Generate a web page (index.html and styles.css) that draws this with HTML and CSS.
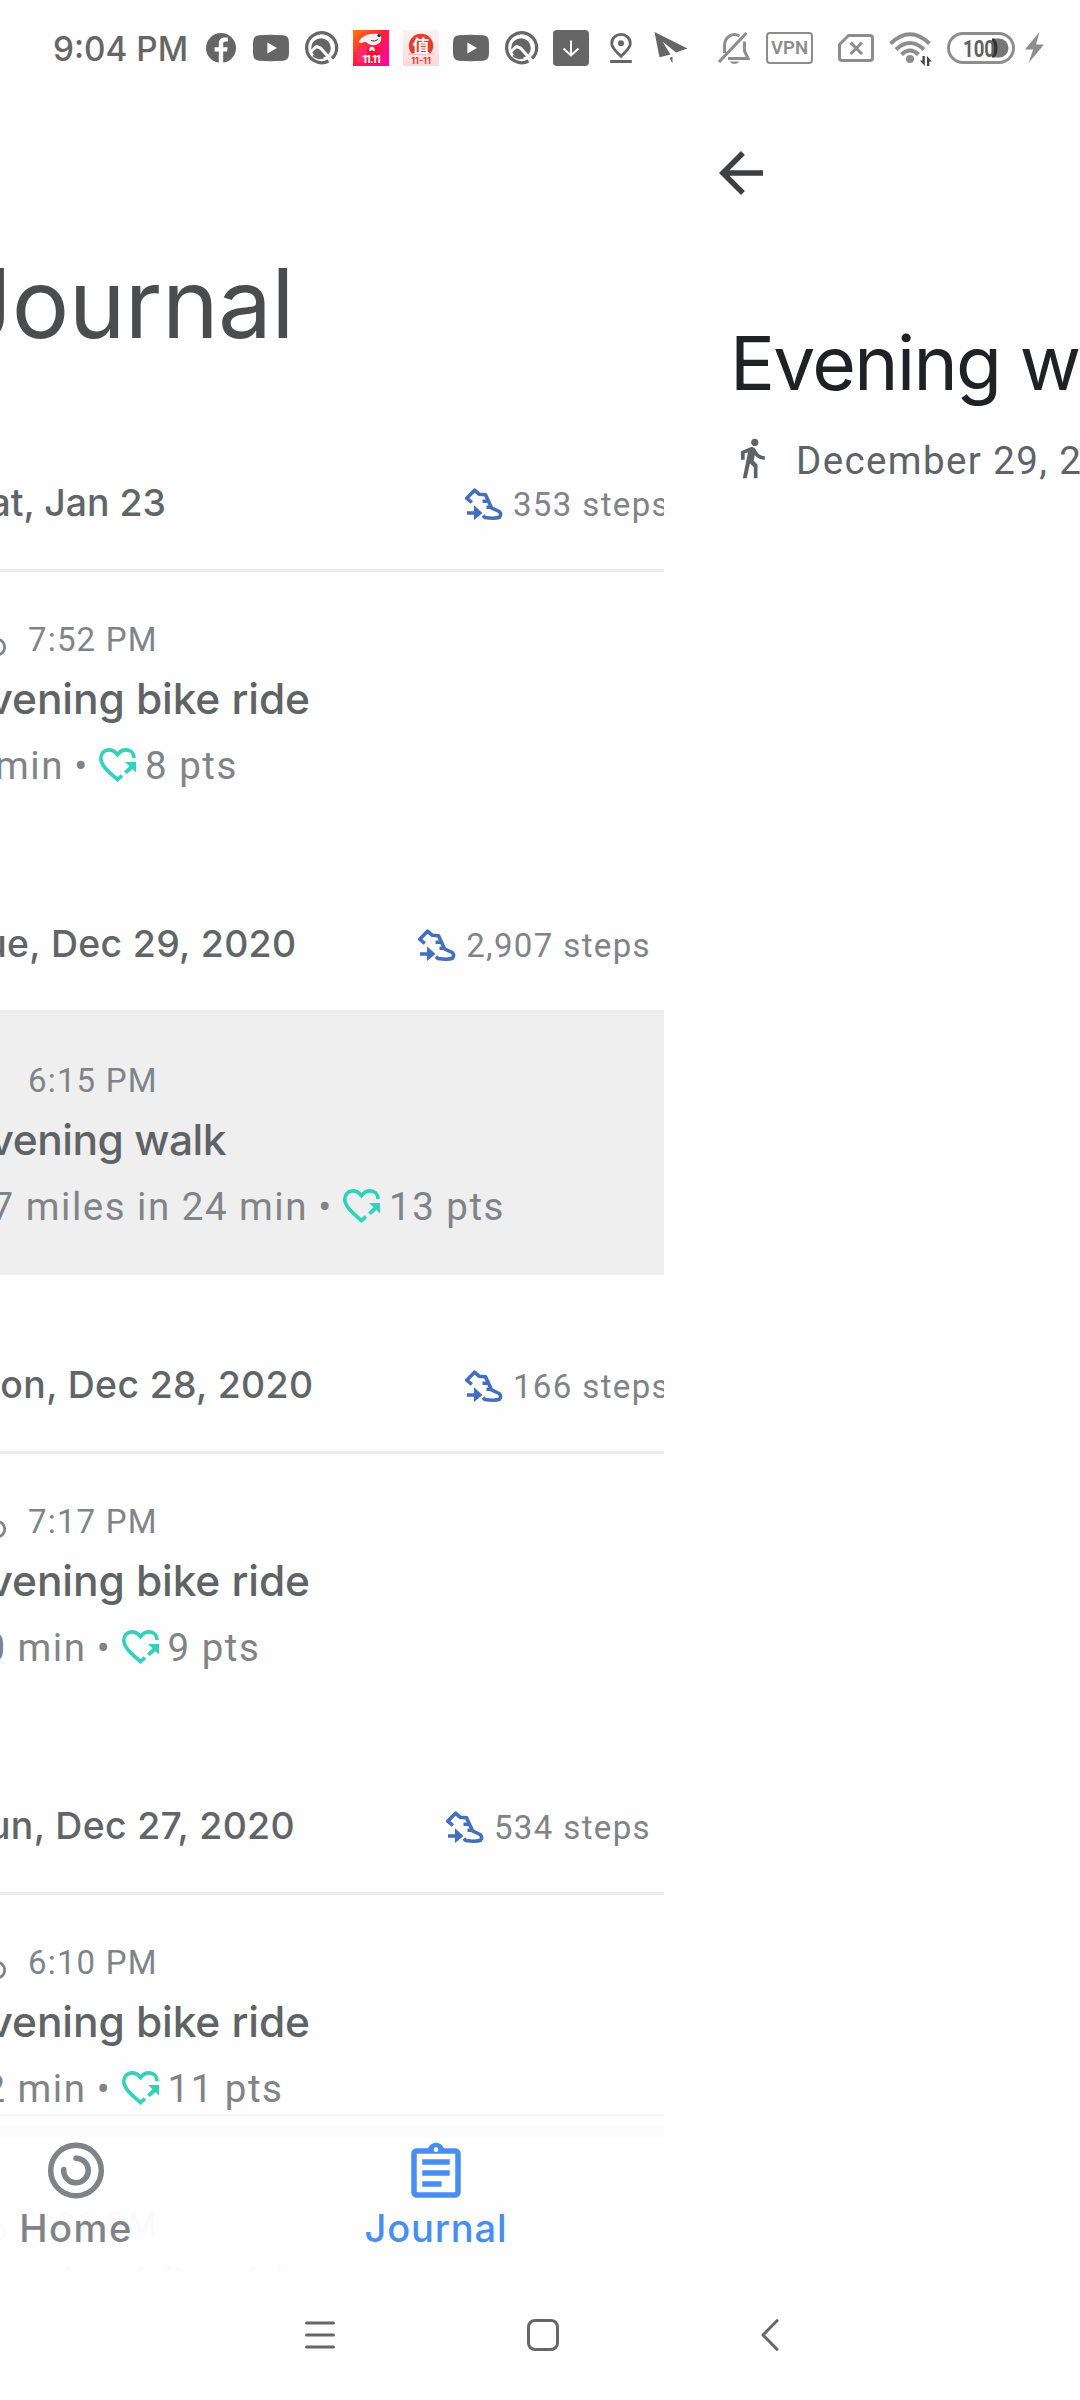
FILE: index.html
```html
<!DOCTYPE html>
<html lang="en">
<head>
<meta charset="utf-8">
<title>Journal</title>
<link rel="stylesheet" href="styles.css">
</head>
<body>
<svg class="defs" width="0" height="0" aria-hidden="true">
  <symbol id="youtube" viewBox="0 0 36 36"><path fill="#666" d="M6 5.2Q18 4.2 30 5.2Q35.5 5.4 35.8 11Q36.4 18 35.8 25Q35.5 30.4 30 30.7Q18 31.6 6 30.7Q.5 30.4.2 25Q-.4 18 .2 11Q.5 5.400 6 5.200Z"/><path fill="#fefefe" d="M14.400 12.600 24 18l-9.600 5.400z"/></symbol>
  <symbol id="quora" viewBox="0 0 36 36"><path fill="none" stroke="#666" stroke-width="3.200" d="M29 28.500A15 15 0 1 0 25.500 31"/><circle cx="18" cy="18" r="9.800" fill="#666"/><path fill="none" stroke="#fefefe" stroke-width="3" d="M7 22.500 13.500 16.500 17.500 18 31 33"/><path fill="none" stroke="#666" stroke-width="2" d="M10 25.500A10.500 10.500 0 0 0 20.500 27.500"/></symbol>
  <symbol id="steps" viewBox="0 0 38 32"><g fill="none" stroke="#4270bc" stroke-width="3.600" stroke-linejoin="round"><path d="M6.800 14.500 1.800 10.200 9.500 2.200 14 6.200 20.500 6.700 26.500 19.800 34.200 23.500Q36.800 26 34.500 29.300Q30 31 19.800 29.500L18 27.600"/><path d="M17.500 13.200h6M21.500 19.200h5"/></g><path fill="#4270bc" d="M2 23.300h7v-6L17.500 25 9 32v-5.300H2z"/></symbol>
  <symbol id="heart" viewBox="0 0 37 34"><path fill="none" stroke="#2fd2ba" stroke-width="3.600" d="M35 10C35 5 31.500 1.900 27.200 1.900 23.500 1.900 20.500 4 18.500 6.600 16.500 4 13.500 1.900 9.800 1.900 5.300 1.900 1.800 5.500 1.800 10.300 1.800 17 8.500 23 18.500 31.600L23 27.600"/><path fill="#2fd2ba" d="M26 14h11v10.500l-3.600-3.600-5.600 5.100-2.800-2.600 5.500-5.200z"/></symbol>
  <symbol id="bike" viewBox="0 0 24 24"><path fill="#808488" d="M15.500 5.500c1.100 0 2-.9 2-2s-.9-2-2-2-2 .9-2 2 .9 2 2 2zM5 12c-2.800 0-5 2.200-5 5s2.200 5 5 5 5-2.200 5-5-2.200-5-5-5zm0 8.500c-1.900 0-3.500-1.600-3.500-3.500s1.600-3.500 3.500-3.500 3.500 1.600 3.500 3.500-1.600 3.500-3.500 3.500zm5.800-10l2.400-2.400.8.8c1.300 1.300 3 2.100 5.100 2.100V9c-1.500 0-2.700-.6-3.600-1.500l-1.900-1.900c-.5-.4-1-.6-1.600-.6s-1.100.2-1.400.6L7.800 8.400c-.4.4-.6.9-.6 1.400 0 .6.2 1.100.6 1.400L11 14v5h2v-6.200l-2.200-2.300zM19 12c-2.800 0-5 2.200-5 5s2.200 5 5 5 5-2.200 5-5-2.200-5-5-5zm0 8.500c-1.900 0-3.500-1.600-3.500-3.500s1.600-3.500 3.500-3.500 3.500 1.600 3.500 3.500-1.600 3.500-3.500 3.500z"/></symbol>
  <symbol id="walk" viewBox="0 0 24 24"><path fill="#5f6368" d="M13.500 5.500c1.100 0 2-.9 2-2s-.9-2-2-2-2 .9-2 2 .9 2 2 2zM9.800 8.900L7 23h2.100l1.800-8 2.100 2v6h2v-7.500l-2.100-2 .6-3C14.800 12 16.800 13 19 13v-2c-1.900 0-3.500-1-4.300-2.400l-1-1.600c-.4-.6-1-1-1.700-1-.3 0-.5.1-.8.1L6 8.300V13h2V9.600l1.800-.7"/></symbol>
</svg>

<div class="screen">
  <header class="status">
    <span class="clock">9:04 PM</span>
    <div class="notifications">
      <svg viewBox="0 0 36 36"><circle cx="18" cy="18" r="15" fill="#666"/><path fill="#fefefe" d="M15.800 33.500V21.600h-4.200v-4.300h4.200v-3.500c0-4.300 2.400-6.300 6-6.300h3v4h-2.200c-1.900 0-2.400.9-2.400 2.400v3.400h4.500l-.7 4.300h-3.800v11.900z"/></svg>
      <svg><use href="#youtube"/></svg>
      <svg><use href="#quora"/></svg>
      <svg viewBox="0 0 36 36">
        <defs><linearGradient id="sale" x1="0" y1="0" x2="1" y2="1"><stop offset="0" stop-color="#ff7a12"/><stop offset=".45" stop-color="#ff1f3c"/><stop offset="1" stop-color="#ff00b4"/></linearGradient></defs>
        <rect width="36" height="36" fill="url(#sale)"/><path fill="#ff2a6c" d="M4 20q7-5 14-4t8 7v9H4z"/><path fill="#ff0a1e" d="M14 17h12v17H14z" opacity=".8"/>
        <path fill="#f2eeee" d="M13 5q7-2 14-1 2 3 1 7-3 5-10 4-3-1-5-3-3 0-5 1-2 0-2-2 3-4 7-6z"/><circle cx="26" cy="5.500" r="1.600" fill="#222"/><path d="M18 10.500q4 1.500 7-1" fill="none" stroke="#444"/>
        <path fill="#fff" d="M17 17h4l1 4h-2l-1-2-1 2h-2z"/><text x="18" y="33" class="tiny tiny-light">11.11</text>
      </svg>
      <svg viewBox="0 0 36 36">
        <defs><linearGradient id="blush" x1="0" y1="0" x2="0" y2="1"><stop offset="0" stop-color="#fdf3f2"/><stop offset="1" stop-color="#fbd9d8"/></linearGradient></defs>
        <rect width="36" height="36" fill="url(#blush)"/><path fill="#e53a2c" d="M8.500 23.500A12.200 12.200 0 1 1 27.500 23.500z"/><path d="M5 24h26" stroke="#f0a9a2"/>
        <text x="18" y="21.500" class="seal">值</text><text x="18" y="33.500" class="tiny tiny-red">11-11</text>
      </svg>
      <svg><use href="#youtube"/></svg>
      <svg><use href="#quora"/></svg>
      <svg viewBox="0 0 36 36"><rect width="36" height="36" rx="4" fill="#666"/><path d="M18 10.500V25M10.500 18.500 18 25.500l7.500-7" fill="none" stroke="#fefefe" stroke-width="2"/></svg>
      <svg viewBox="0 0 36 36"><path fill="none" stroke="#666" stroke-width="2.800" d="M18 26.300C13 21 8.700 18 8.700 13.400a9.300 9 0 0 1 18.600 0C27.300 18 23 21 18 26.300z"/><circle cx="18" cy="13.300" r="3" fill="#666"/><path d="M7.200 31.500h21.600" stroke="#666" stroke-width="3"/></svg>
      <svg viewBox="0 0 36 36"><path fill="#666" d="M1.500 2 34.500 18.600 23 22.400 9.500 11.500 17.500 24.500 6.500 27.200z"/><path fill="#666" d="M16.500 28 19.500 26.500V33z"/></svg>
    </div>
    <div class="system">
      <svg class="bell" viewBox="0 0 32 32"><g fill="none" stroke="#8d8d8d" stroke-width="3"><path d="M6.500 21V13.500a10 11 0 0 1 15-9.500M26.500 9.500V19l3.500 7.500H10M1 30 28.500 1"/></g><path fill="#8d8d8d" d="M11.500 29.500h10q-5 5-10 0z"/></svg>
      <span class="vpn">VPN</span>
      <svg class="sim" viewBox="0 0 36 30"><path fill="none" stroke="#8d8d8d" stroke-width="3" stroke-linejoin="round" d="M10.500 2.500H32a2.500 2.500 0 0 1 2.500 2.500v20a2.500 2.500 0 0 1-2.500 2.500H4A2.500 2.500 0 0 1 1.500 25V11.500z"/><path d="m12.500 9.500 11.500 11.500m0-11.500L12.500 21" stroke="#8d8d8d" stroke-width="3"/></svg>
      <svg class="wifi" viewBox="0 0 43 34"><g fill="none" stroke="#8d8d8d" stroke-width="4"><path d="M1.500 11.500Q21 -7 40.500 11.500M7 17.500Q21 4.500 35 17.500M12.500 22.500Q21 14.500 29.500 22.500"/></g><circle cx="21" cy="27" r="4" fill="#8d8d8d"/><path fill="#444" d="M35.800 24h-2.300v4.500h-2.500l4.800 5.500zM38 34h2.300v-4.500h2.500L38 24z"/></svg>
      <svg class="battery" viewBox="0 0 68 32"><rect x="1.500" y="1.500" width="65" height="29" rx="14.500" fill="none" stroke="#8d8d8d" stroke-width="3"/><path fill="#777" d="M45 6.500h7a9.500 9.500 0 0 1 0 19h-7z"/><path fill="#333" d="M45 6.500q5.500 0 5.500 9.500T45 25.500z"/><text x="16" y="24.500" textLength="32" lengthAdjust="spacingAndGlyphs" class="level">100</text></svg>
      <svg class="bolt" viewBox="0 0 19 31"><path fill="#8d8d8d" d="M14.500 0 0 17.500h8.200L3.500 31 19 12.500h-8z"/></svg>
    </div>
  </header>

  <div class="pages">
    <main class="journal">
      <h1><span>Journal</span></h1>

      <section class="day jan23">
        <div class="day-head"><h2>Sat, Jan 23</h2><p class="steps past-edge"><svg><use href="#steps"/></svg>353 steps</p></div>
        <article>
          <p class="time"><svg><use href="#bike"/></svg>7:52 PM</p>
          <h3>Evening bike ride</h3>
          <p class="details"><span class="amount">7 min</span><span class="dot">•</span><svg><use href="#heart"/></svg>8 pts</p>
        </article>
      </section>

      <section class="day dec29">
        <div class="day-head"><h2>Tue, Dec 29, 2020</h2><p class="steps"><svg><use href="#steps"/></svg>2,907 steps</p></div>
        <article class="pressed">
          <p class="time"><svg><use href="#walk"/></svg>6:15 PM</p>
          <h3>Evening walk</h3>
          <p class="details"><span class="amount">1.27 miles in 24 min</span><span class="dot">•</span><svg><use href="#heart"/></svg>13 pts</p>
        </article>
      </section>

      <section class="day dec28">
        <div class="day-head"><h2>Mon, Dec 28, 2020</h2><p class="steps past-edge"><svg><use href="#steps"/></svg>166 steps</p></div>
        <article>
          <p class="time"><svg><use href="#bike"/></svg>7:17 PM</p>
          <h3>Evening bike ride</h3>
          <p class="details"><span class="amount">10 min</span><span class="dot">•</span><svg><use href="#heart"/></svg>9 pts</p>
        </article>
      </section>

      <section class="day dec27">
        <div class="day-head"><h2>Sun, Dec 27, 2020</h2><p class="steps"><svg><use href="#steps"/></svg>534 steps</p></div>
        <article>
          <p class="time"><svg><use href="#bike"/></svg>6:10 PM</p>
          <h3>Evening bike ride</h3>
          <p class="details"><span class="amount">12 min</span><span class="dot">•</span><svg><use href="#heart"/></svg>11 pts</p>
        </article>
        <article class="under-tabs">
          <p class="time"><svg><use href="#bike"/></svg>2:28 PM</p>
          <h3>Evening bike ride</h3>
        </article>
      </section>

      <nav class="tabs">
        <a class="tab home">
          <svg viewBox="0 0 66 66"><g fill="none" stroke="#808488" stroke-width="5.500"><circle cx="33" cy="30.500" r="25.300"/><path stroke-linecap="round" d="M33 18.200A12.300 12.300 0 1 1 20.700 29.500"/></g></svg>
          <span>Home</span>
        </a>
        <a class="tab active">
          <svg viewBox="0 0 24 24"><path fill="#468ff0" fill-rule="evenodd" d="M19 3h-4.180C14.400 1.840 13.300 1 12 1s-2.400.84-2.820 2H5c-1.100 0-2 .9-2 2v14c0 1.100.9 2 2 2h14c1.100 0 2-.9 2-2V5c0-1.100-.9-2-2-2zm-7-.35a.85.85 0 1 1 0 1.700.85.85 0 0 1 0-1.700zM5 5h14v14H5zM7 7v2h10V7zm0 4v2h10v-2zm0 4v2h7v-2z"/></svg>
          <span>Journal</span>
        </a>
      </nav>
    </main>

    <aside class="activity">
      <svg class="back" viewBox="0 0 24 24"><path fill="#3c4043" d="M20 11H7.830l5.590-5.590L12 4l-8 8 8 8 1.410-1.410L7.830 13H20v-2z"/></svg>
      <h1>Evening walk</h1>
      <p class="when"><svg><use href="#walk"/></svg>December 29, 2020</p>
    </aside>
  </div>

  <footer class="navbar">
    <svg viewBox="0 0 36 36"><path d="M4.500 6h27M4.500 18h27M4.500 30h27" stroke="#666" stroke-width="3" stroke-linecap="round"/></svg>
    <svg viewBox="0 0 36 36"><rect x="3.500" y="3.500" width="29" height="29" rx="6.500" fill="none" stroke="#666" stroke-width="3"/></svg>
    <svg viewBox="0 0 36 36"><path d="M25 3.700 11 18l14 14.300" fill="none" stroke="#666" stroke-width="3" stroke-linecap="round" stroke-linejoin="round"/></svg>
  </footer>
</div>
</body>
</html>
```
FILE: styles.css
```css
* { box-sizing: border-box; margin: 0; padding: 0; }
body { background: #fefefe; font-family: Roboto, sans-serif; }
svg { display: block; flex: none; }
.defs { position: absolute; }

.screen {
  display: flex;
  flex-direction: column;
  width: 1080px;
  height: 2400px;
  overflow: hidden;
}

/* status bar */
.status { display: flex; align-items: flex-start; height: 104px; padding: 30px 0 0 53px; }
.clock {
  width: 150px;
  color: #666;
  font: 500 33.300px/40px Inter, sans-serif;
  white-space: nowrap;
  margin-top: -1px;
}
.notifications { display: flex; gap: 14px; width: 500px; }
.notifications svg { width: 36px; height: 36px; }
.tiny { font: 700 9px Inter, sans-serif; text-anchor: middle; }
.tiny-light { fill: #fff; font-size: 11px; letter-spacing: -.8px; }
.tiny-red { fill: #e0443a; }
.seal { fill: #fff; font: 700 17px "Noto Sans CJK SC", sans-serif; text-anchor: middle; }
.system { display: flex; margin-left: 15px; }
.bell { width: 32px; height: 32px; margin-top: 2px; }
.vpn {
  width: 47px;
  height: 32px;
  margin: 2px 0 0 16px;
  border: 2.500px solid #8d8d8d;
  border-radius: 4px;
  color: #8d8d8d;
  font: 600 18.500px/28px Roboto, sans-serif;
  text-align: center;
}
.sim { width: 36px; height: 30px; margin: 3px 0 0 25px; }
.wifi { width: 43px; height: 34px; margin: 2px 0 0 15px; }
.battery { width: 68px; height: 32px; margin: 2px 0 0 15px; }
.level { fill: #606060; font: 700 23px Roboto, sans-serif; }
.bolt { width: 19px; height: 31px; margin: 2px 0 0 10px; }

/* two pages side by side, mid-transition */
.pages { display: flex; height: 2166px; }

.journal {
  position: relative;
  width: 664px;
  overflow: hidden;
}
.journal h1 {
  display: flex;
  justify-content: flex-end;
  width: 294px;
  height: 289px;
  padding-top: 141px;
  color: #4b4c4e;
  font: 400 96px/116px Inter, sans-serif;
  letter-spacing: -.6px;
}

.day-head {
  display: flex;
  justify-content: space-between;
  height: 176px;
  padding: 87px 13px 0 0;
}
.day-head h2 {
  display: flex;
  justify-content: flex-end;
  color: #616568;
  font: 500 37.400px/46px Inter, sans-serif;
  letter-spacing: .35px;
  white-space: nowrap;
}
.jan23 h2 { width: 166px; letter-spacing: 0; }
.dec29 h2 { width: 296.500px; }
.dec28 h2 { width: 313.500px; }
.dec27 h2 { width: 295px; }

.steps {
  display: flex;
  align-items: center;
  height: 40px;
  margin-top: 5px;
  color: #808488;
  font-size: 33px;
  line-height: 40px;
  letter-spacing: 1.370px;
  white-space: nowrap;
}
.steps svg { width: 38px; height: 32px; margin: -3px 10px 0 0; }
.past-edge { margin-right: -19px; }

article { height: 262px; padding-top: 48px; }
.day-head + article { height: 265px; border-top: 3px solid #ececec; }
.pressed { background: #efefef; }

.time {
  display: flex;
  align-items: center;
  height: 40px;
  color: #808488;
  font-size: 33px;
  line-height: 40px;
  letter-spacing: 1.180px;
}
.time svg { width: 44px; height: 44px; margin: -4px 22px 0 -38px; }

article h3 {
  display: flex;
  justify-content: flex-end;
  width: 310px;
  margin-top: 13px;
  color: #5f6366;
  font: 500 42.500px/52px Inter, sans-serif;
  letter-spacing: -.1px;
  white-space: nowrap;
}
.pressed h3 { width: 226px; letter-spacing: -.5px; }

.details {
  display: flex;
  align-items: center;
  height: 46px;
  margin-top: 18px;
  color: #808488;
  font-size: 38.500px;
  line-height: 46px;
  letter-spacing: 1.500px;
  white-space: nowrap;
}
.amount { display: flex; justify-content: flex-end; width: 86.500px; }
.jan23 .amount { width: 64px; }
.dec29 .amount { width: 308px; }
.dot { width: 35px; text-align: center; }
.details svg { width: 37px; height: 34px; margin: -2px 9px 0 0; }

/* bottom tabs float over the list */
.tabs {
  position: absolute;
  left: 0;
  right: 0;
  bottom: 0;
  display: flex;
  height: 156px;
  border-top: 2px solid #f7f7f7;
  background: linear-gradient(rgba(254,254,254,.975) 9px, rgba(252,252,252,.975) 9px 21px, rgba(254,254,254,.975) 21px);
}
.tab { display: flex; flex: none; flex-direction: column; align-items: center; width: 360px; padding-top: 24px; }
.home { margin-left: -104px; }
.tab svg { width: 66px; height: 66px; }
.tab span {
  margin-top: -1px;
  color: #808488;
  font: 500 38.100px/46px Inter, sans-serif;
  letter-spacing: 1.500px;
}
.tab.active span { color: #468ff0; letter-spacing: .840px; }

/* incoming page */
.activity { width: 416px; padding: 36px 0 0 44px; overflow: hidden; white-space: nowrap; }
.back { width: 66px; height: 66px; }
.activity h1 {
  margin: 111px 0 0 22px;
  color: #202124;
  font: 400 74.900px/92px Inter, sans-serif;
  letter-spacing: -1.650px;
}
.when {
  display: flex;
  align-items: center;
  height: 46px;
  margin: 29px 0 0 22px;
  color: #5f6368;
  font-size: 38.500px;
  line-height: 46px;
  letter-spacing: 1.400px;
}
.when svg { width: 44px; height: 44px; margin: -6px 22px 0 0; }

/* system navigation */
.navbar { display: flex; height: 130px; padding: 47px 0 0 302px; }
.navbar svg { width: 36px; height: 36px; margin-right: 187px; }
.navbar svg + svg { margin-right: 191px; }
```
